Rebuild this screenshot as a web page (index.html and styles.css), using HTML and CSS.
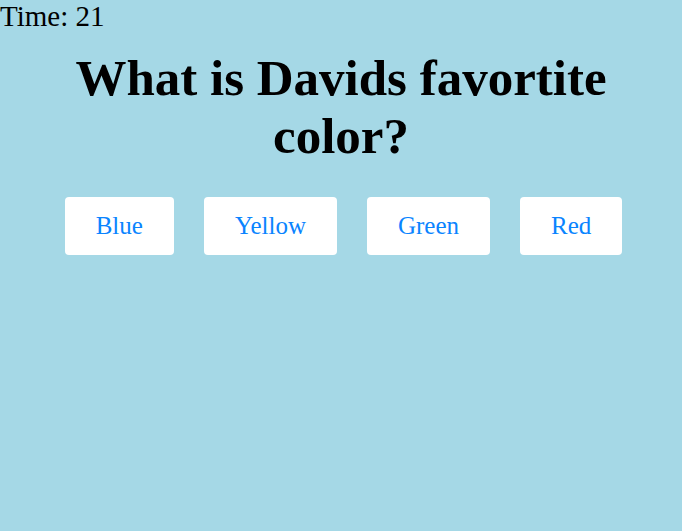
FILE: index.html
```html
<!DOCTYPE html>
<html>
<head>
<meta charset="utf-8">
<link rel="stylesheet" href="styles.css">
</head>
<body>
<div class="timer">Time: 21</div>
<h1 class="question">What is Davids favortite color?</h1>
<div class="answers">
  <button class="answer">Blue</button>
  <button class="answer">Yellow</button>
  <button class="answer">Green</button>
  <button class="answer">Red</button>
</div>
</body>
</html>
```
FILE: styles.css
```css
html, body {
  margin: 0;
  padding: 0;
  background: #a5d8e6;
  height: 100%;
}
body {
  font-family: "Liberation Serif", "Times New Roman", serif;
  color: #000;
}
.timer {
  font-size: 29px;
  line-height: 32px;
}
.question {
  font-size: 51px;
  font-weight: bold;
  text-align: center;
  line-height: 58px;
  max-width: 600px;
  margin: 17px auto 0;
}
.answers {
  display: flex;
  justify-content: center;
  gap: 30px;
  margin-top: 32px;
  padding-left: 5px;
}
.answer {
  font-family: "Liberation Serif", "Times New Roman", serif;
  font-size: 25px;
  color: #0a84ff;
  background: #fff;
  border: none;
  border-radius: 4px;
  height: 58px;
  padding: 0 31px;
}
```
